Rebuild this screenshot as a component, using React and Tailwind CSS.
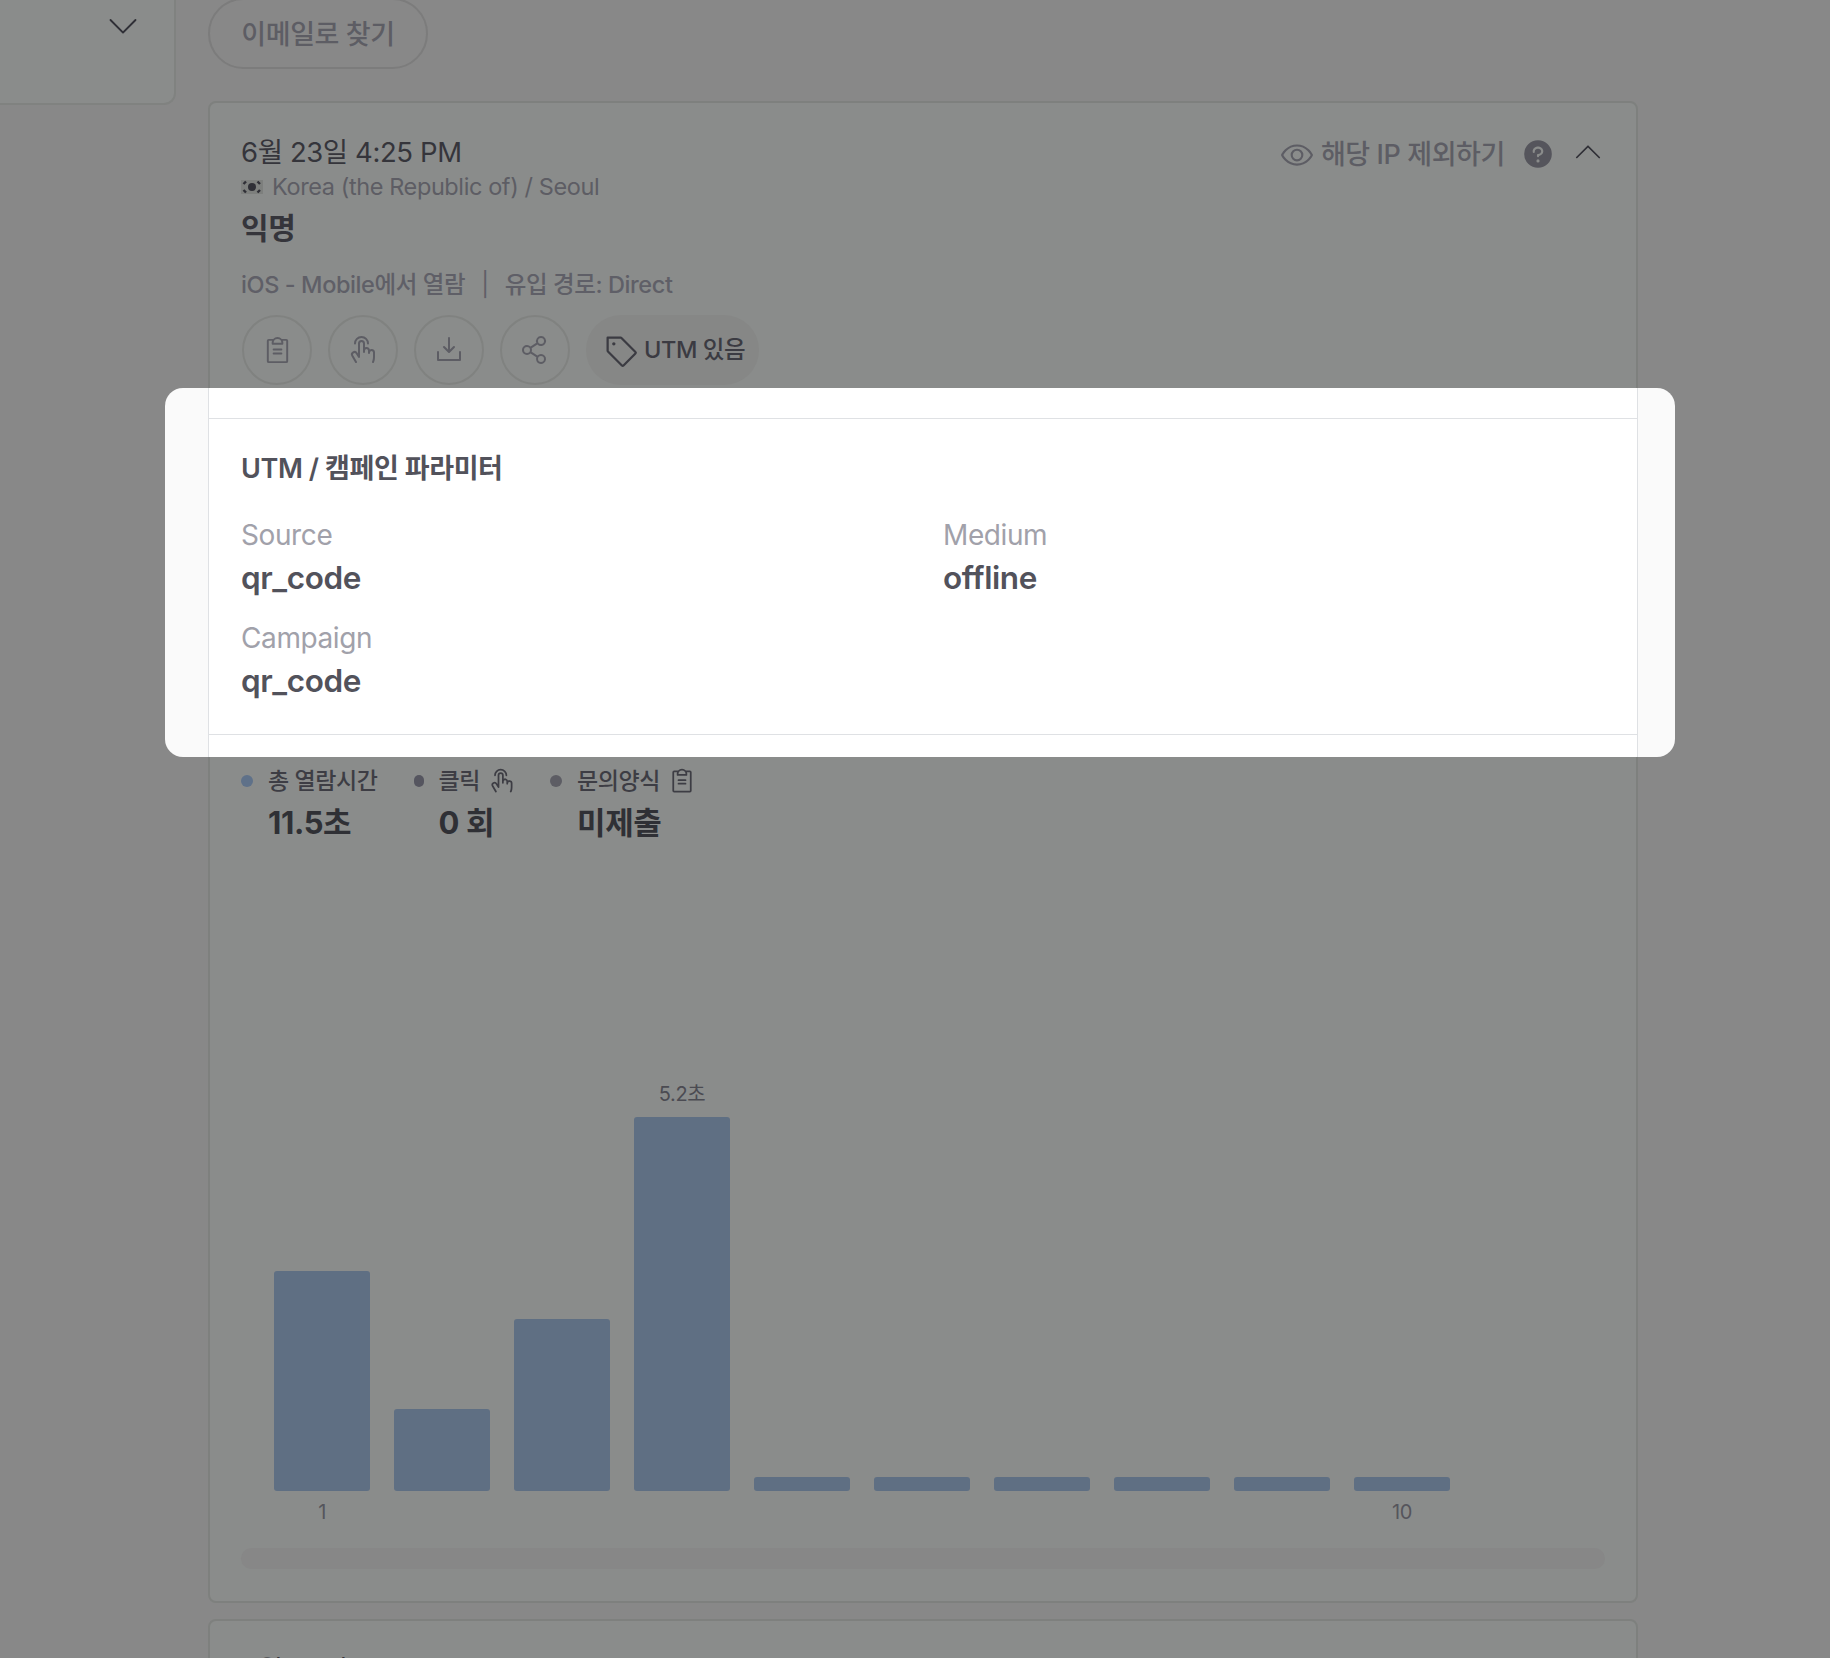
import {
  PiCaretDownLight,
  PiCaretUpLight,
  PiClipboardText,
  PiDownloadSimple,
  PiEye,
  PiHandTap,
  PiQuestionFill,
  PiShareNetwork,
  PiTag,
} from "react-icons/pi";

const bars = [
  { h: "h-[220px]", axis: "1" },
  { h: "h-[82px]" },
  { h: "h-[172px]" },
  { h: "h-[374px]", label: "5.2초" },
  { h: "h-[14px]" },
  { h: "h-[14px]" },
  { h: "h-[14px]" },
  { h: "h-[14px]" },
  { h: "h-[14px]" },
  { h: "h-[14px]", axis: "10" },
];

function KoreaFlag() {
  return (
    <svg width="22" height="14" viewBox="0 0 22 14" className="shrink-0">
      <rect width="22" height="14" fill="#7d7f7d" />
      <circle cx="11" cy="7" r="4" fill="#2f2f36" />
      <path d="M2.5 4 5 1.5M16.5 1.5 19 4M2.5 10 5 12.5M16.5 12.5 19 10" stroke="#2f2f36" strokeWidth="2.4" />
    </svg>
  );
}

function CircleIcon({ children }) {
  return (
    <div className="flex h-[70px] w-[70px] items-center justify-center rounded-full border-2 border-[#808280] text-[#5d5d64]">
      {children}
    </div>
  );
}

function Param({ label, value }) {
  return (
    <div className="flex flex-col gap-[8px]">
      <span className="text-[28px] leading-[32px] text-[#a1a1aa]">{label}</span>
      <span className="text-[31.5px] font-semibold leading-[38px] text-[#52525b]">{value}</span>
    </div>
  );
}

function Stat({ dot, label, icon, value, className }) {
  return (
    <div className={`flex ${className}`}>
      <span className={`mt-[8px] h-[12px] shrink-0 rounded-full ${dot}`} />
      <div>
        <div className="flex h-[28px] items-center gap-[8px] text-[23px] font-medium text-[#3d3d44]">
          {label}
          {icon}
        </div>
        <div className="mt-[10px] text-[31px] font-bold leading-[36px] text-[#2f3035]">{value}</div>
      </div>
    </div>
  );
}

export default function App() {
  return (
    <div className="flex h-[1658px] w-[1830px] gap-[32px] overflow-hidden bg-[#888888] font-['Inter','Noto_Sans_CJK_KR',sans-serif] tracking-tight">
      {/* LEFT PANEL */}
      <div className="flex h-[105px] w-[176px] shrink-0 justify-end rounded-br-xl border-r-2 border-b-2 border-[#808280] bg-[#8a8c8b] pt-[5px] pr-[31px]">
        <PiCaretDownLight size={40} className="text-[#2f2f36]" />
      </div>

      <div className="w-[1430px] shrink-0 -mt-[2px]">
        <button className="flex h-[71px] w-[220px] items-center justify-center rounded-full border-2 border-[#7c7c7c] pt-[3px] text-[27px] font-medium text-[#5d5d64]">
          이메일로 찾기
        </button>

        {/* VISIT CARD */}
        <div className="mt-[32px] rounded-lg border-2 border-[#7e807e] bg-[#8a8c8b] px-[31px] pt-[34px] pb-[32px]">
          <div className="flex items-start justify-between">
            <div>
              <div className="text-[27.5px] leading-[30px] text-[#35353b]">6월 23일 4:25 PM</div>
              <div className="mt-[5px] flex items-center gap-[8px] text-[23.5px] leading-[30px] text-[#5d5d64]">
                <KoreaFlag />
                <span className="ml-[1px]">Korea (the Republic of) / Seoul</span>
              </div>
            </div>
            <div className="-mr-[1px] flex h-[36px] items-center">
              <PiEye size={34} className="text-[#5d5d64]" />
              <span className="ml-[7px] text-[27px] font-medium text-[#5d5d64]">해당 IP 제외하기</span>
              <PiQuestionFill size={34} className="ml-[16px] -translate-y-[1px] text-[#55555c]" />
              <PiCaretUpLight size={36} className="ml-[15px] -translate-y-[2px] text-[#2f2f36]" />
            </div>
          </div>
          <div className="mt-[8px] text-[30px] font-bold leading-[36px] text-[#35353b]">익명</div>
          <div className="mt-[24px] flex text-[23.5px] font-medium leading-[30px] text-[#5f5f67]">
            iOS - Mobile에서 열람
            <span className="mx-[16px] font-normal">|</span>
            유입 경로: Direct
          </div>

          <div className="mt-[15px] ml-[1px] flex items-center gap-[16px]">
            <CircleIcon><PiClipboardText size={31} /></CircleIcon>
            <CircleIcon><PiHandTap size={32} /></CircleIcon>
            <CircleIcon><PiDownloadSimple size={32} /></CircleIcon>
            <CircleIcon><PiShareNetwork size={32} /></CircleIcon>
            <div className="flex h-[70px] w-[173px] items-center gap-[6px] rounded-full bg-[#868786] pl-[16px] text-[23.5px] font-medium text-[#3b3b42]">
              <PiTag size={36} />
              UTM 있음
            </div>
          </div>

          {/* HIGHLIGHTED UTM BLOCK */}
          <div className="mt-[3px] -ml-[76px] -mr-[70px] h-[369px] rounded-[18px] bg-[#fafafa] pl-[43px] pr-[37px]">
            <div className="h-full border-x border-[#dfe1e4] bg-white pt-[30px]">
              <div className="h-[317px] border-y border-[#dfe1e4] px-[32px] pt-[32px]">
                <div className="text-[27px] font-semibold leading-[36px] text-[#52525b]">UTM / 캠페인 파라미터</div>
                <div className="mt-[32px] grid grid-cols-2 gap-x-[40px] gap-y-[25px]">
                  <Param label="Source" value="qr_code" />
                  <Param label="Medium" value="offline" />
                  <Param label="Campaign" value="qr_code" />
                </div>
              </div>
            </div>
          </div>

          {/* STATS */}
          <div className="mt-[10px] flex">
            <Stat className="mr-[36px] gap-[15px]" dot="w-[12px] bg-[#5f7189]" label="총 열람시간" value="11.5초" />
            <Stat className="mr-[34px] gap-[15px]" dot="w-[10px] bg-[#55555f]" label="클릭" value="0 회" icon={<PiHandTap size={28} />} />
            <Stat className="gap-[15px]" dot="w-[12px] bg-[#5d5d64]" label="문의양식" value="미제출" icon={<PiClipboardText size={28} />} />
          </div>

          {/* CHART */}
          <div className="-mt-[1px] flex h-[684px] items-end gap-[24px] pl-[33px]">
            {bars.map((bar, i) => (
              <div key={i} className="flex w-[96px] flex-col items-center">
                {bar.label && <span className="mb-[12px] text-[20px] leading-[22px] text-[#4b4b52]">{bar.label}</span>}
                <div className={`w-full rounded-[3px] bg-[#5f6f83] ${bar.h}`} />
                <span className="mt-[9px] h-[24px] text-[20px] leading-[24px] text-[#55555c]">{bar.axis}</span>
              </div>
            ))}
          </div>

          <div className="mt-[24px] h-[21px] rounded-full bg-[#878787]" />
        </div>

        {/* NEXT CARD */}
        <div className="mt-[16px] h-[200px] rounded-lg border-2 border-[#7e807e] bg-[#8a8c8b] px-[31px] pt-[34px]">
          <div className="text-[27.5px] leading-[30px] text-[#35353b]">6월 23일 4:25 PM</div>
        </div>
      </div>
    </div>
  );
}
